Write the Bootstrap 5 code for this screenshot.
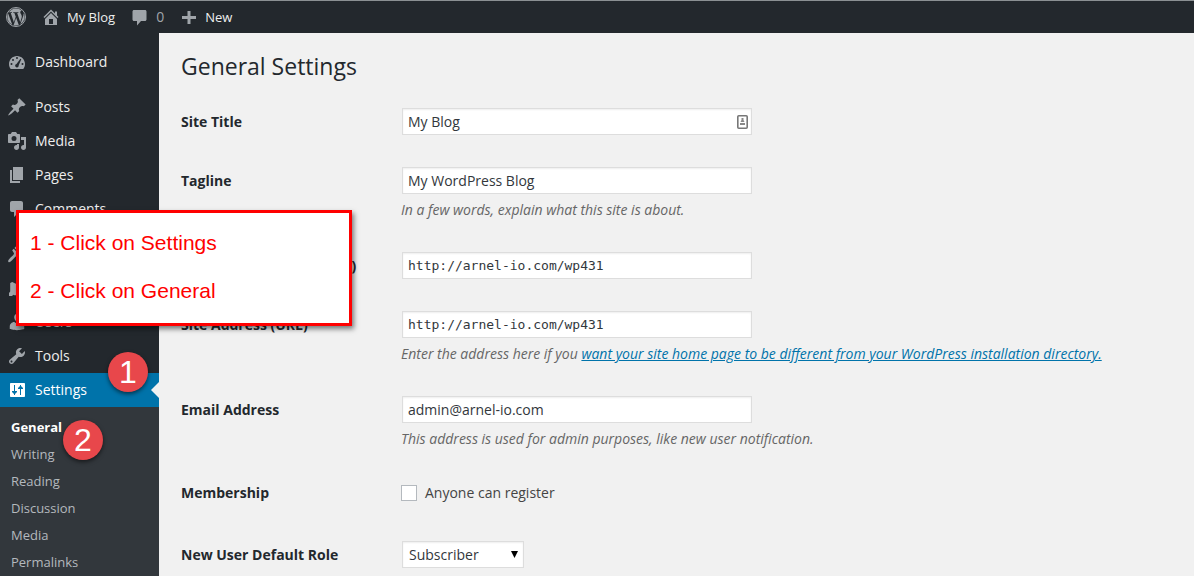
<!DOCTYPE html>
<html lang="en">
<head>
<meta charset="utf-8">
<meta name="viewport" content="width=device-width, initial-scale=1">
<title>General Settings - My Blog</title>
<link href="https://cdn.jsdelivr.net/npm/bootstrap@5.3.0/dist/css/bootstrap.min.css" rel="stylesheet">
<style>
body{font-family:"Open Sans",sans-serif;font-size:14px;line-height:20px;color:#444;background:#f1f1f1}
.topbar{height:33px;background:#23282d;border-top:1px solid #8b9093;font-size:13px;padding-left:6px;gap:15px}
.topbar a{color:#eee;text-decoration:none;gap:6px}
.topbar svg,.side-menu svg{fill:#a0a5aa;display:block;flex:none}
.topbar .count{color:#a0a5aa;font-size:14px}
.shell{min-height:calc(100vh - 33px)}
.sidebar{width:159px;flex:none;background:#23282d;padding-top:12px}
.side-menu a{color:#eee;text-decoration:none;height:34px;padding-left:7px;gap:8px}
.side-menu .group{margin-top:11px}
.side-menu .current{background:#0073aa;color:#fff}
.side-menu .current svg{fill:#fff}
.side-menu .current::after{content:"";position:absolute;right:0;top:9px;border:8px solid transparent;border-right-color:#f1f1f1;border-left:0}
.submenu{background:#32373c;padding-top:7px;font-size:13px}
.submenu a{display:block;height:27px;line-height:27px;padding-left:11px;color:#b4b9be;text-decoration:none}
.submenu .chosen{color:#fff;font-weight:700}
.content{padding:18px 22px 8px}
h1{font-size:23px;line-height:30px;font-weight:400;color:#23282d;margin:0 0 27px}
.setting{margin-bottom:32px}
.setting:last-child{margin-bottom:0}
.setting-name{width:220px;flex:none;line-height:27px;font-weight:700;color:#23282d}
.field{border:1px solid #ddd;border-radius:0;background:#fff;color:#32373c;height:27px;padding:0 5px;font-size:14px;line-height:20px;margin-left:1px;box-shadow:inset 0 1px 2px rgba(0,0,0,.07)}
.field-box{width:351px;max-width:100%}
.field.url{font-family:"DejaVu Sans Mono",monospace;font-size:13px}
.role-box{width:123px}
.role-box .field{padding-left:6px;appearance:none}
.hint{margin:6px 0 0;font-size:14px;line-height:20px;font-style:italic;color:#666}
.hint a{color:#0073aa}
.choice{height:24px;line-height:24px}
.choice .setting-name{line-height:24px}
.tick{appearance:none;width:16px;height:16px;border:1px solid #b4b9be;background:#fff;margin:0}
.over-field{right:4px;top:7px}
.over-select{right:6px;top:10px}
.callout-note{left:16px;top:210px;width:336px;height:116px;background:#fff;border:3px solid red;color:red;padding:6px 11px;font:21px/48px "Liberation Sans",sans-serif;box-shadow:2px 3px 5px rgba(0,0,0,.5);z-index:5}
.step{width:40px;height:40px;border-radius:50%;background:#e8474b;color:#fff;font:32px/40px "Liberation Sans",sans-serif;text-align:center;box-shadow:0 2px 4px rgba(0,0,0,.55);z-index:4}
.step-one{left:108px;top:-21px}
.step-two{left:63px;top:13px}
</style>
</head>
<body>
<header class="topbar d-flex align-items-center">
  <a href="#" aria-label="About WordPress"><svg width="20" height="20" viewBox="0 0 16 16"><path d="M12.633 7.653c0-.848-.305-1.435-.566-1.892l-.08-.13c-.317-.51-.594-.958-.594-1.48 0-.63.478-1.218 1.152-1.218q.03 0 .058.003l.031.003A6.84 6.84 0 0 0 8 1.137 6.86 6.86 0 0 0 2.266 4.23c.16.005.313.009.442.009.717 0 1.828-.087 1.828-.087.37-.022.414.521.044.565 0 0-.371.044-.785.065l2.5 7.434 1.5-4.506-1.07-2.929c-.369-.022-.719-.065-.719-.065-.37-.022-.326-.588.043-.566 0 0 1.134.087 1.808.087.718 0 1.83-.087 1.83-.087.37-.022.413.522.043.566 0 0-.372.043-.785.065l2.48 7.377.684-2.287.054-.173c.27-.86.469-1.495.469-2.046zM1.137 8a6.86 6.86 0 0 0 3.868 6.176L1.73 5.206A6.8 6.8 0 0 0 1.137 8M6.061 14.583l2.059-5.984 2.109 5.78q.02.05.049.094a6.85 6.85 0 0 1-4.218.109zM14.021 4.707q.046.328.047.706c0 .696-.13 1.479-.522 2.458l-2.096 6.06a6.86 6.86 0 0 0 2.572-9.224z"/><circle cx="8" cy="8" r="7.6" fill="none" stroke="#a0a5aa" stroke-width=".8"/></svg></a>
  <a href="#" class="d-flex align-items-center"><svg width="20" height="20" viewBox="0 0 20 20"><path d="M16 8.500l1.530 1.530-1.060 1.060L10 4.600l-6.470 6.490-1.060-1.060L10 2.500l4 4v-2h2v4zm-6-2.460l6 5.990V18H4v-5.970zM12 17v-5H8v5h4z"/></svg>My Blog</a>
  <a href="#" class="d-flex align-items-center" aria-label="Comments"><svg width="20" height="20" viewBox="0 0 20 20"><path d="M4 3h11c.8 0 1.500.7 1.500 1.500v8c0 .8-.7 1.500-1.500 1.500H11l-4 4.500V14H4c-.8 0-1.500-.7-1.500-1.500v-8C2.500 3.700 3.200 3 4 3z"/></svg><span class="count">0</span></a>
  <a href="#" class="d-flex align-items-center"><svg width="20" height="20" viewBox="0 0 20 20"><path d="M8.500 4h3v5h5.500v3h-5.500v5h-3v-5H3V9h5.500z"/></svg>New</a>
</header>
<div class="shell d-flex">
  <nav class="sidebar d-flex flex-column" aria-label="Main menu">
    <div class="side-menu">
      <a href="#" class="d-flex align-items-center"><svg width="20" height="20" viewBox="0 0 20 20"><path fill-rule="evenodd" d="M3.760 17h12.480c1.100-1.370 1.760-3.110 1.760-5 0-4.420-3.580-8-8-8s-8 3.580-8 8c0 1.890.660 3.630 1.760 5zM9 6a1 1 0 1 1 2 0 1 1 0 0 1-2 0zM5 8a1 1 0 1 1 2 0 1 1 0 0 1-2 0zM3.500 12a1 1 0 1 1 2 0 1 1 0 0 1-2 0zM14.500 12a1 1 0 1 1 2 0 1 1 0 0 1-2 0zM8.200 13.300c.1-.7.700-1 1.300-1.200L13.400 6.700l.9.600-2.600 6c.2 1.200-.6 2.200-1.700 2.200-1.200 0-2-1-1.800-2.200z"/></svg>Dashboard</a>
      <a href="#" class="group d-flex align-items-center"><svg width="20" height="20" viewBox="0 0 20 20"><path d="M10.440 3.020l1.820-1.820 6.360 6.350-1.830 1.820c-1.050-.680-2.480-.570-3.410.360l-.750.750c-.920.930-1.040 2.350-.350 3.410l-1.830 1.820-2.410-2.410-2.800 2.790c-.420.420-3.380 2.710-3.800 2.290s1.860-3.390 2.280-3.810l2.790-2.790L4.100 9.360l1.830-1.820c1.050.690 2.480.570 3.400-.360l.750-.750c.930-.920 1.050-2.350.360-3.410z"/></svg>Posts</a>
      <a href="#" class="d-flex align-items-center"><svg width="20" height="20" viewBox="0 0 20 20"><path fill-rule="evenodd" d="M13 11V4c0-.550-.450-1-1-1h-1.670L9 1H5L3.670 3H2c-.550 0-1 .450-1 1v7c0 .550.450 1 1 1h10c.550 0 1-.450 1-1zM7 5a2.500 2.500 0 1 1 0 5 2.500 2.500 0 0 1 0-5zM14 6h5v10.500c0 1.380-1.120 2.500-2.500 2.500S14 17.880 14 16.500s1.120-2.500 2.500-2.500c.170 0 .340.020.500.050V9h-3V6zm-4 8.050V13h2v3.500c0 1.380-1.120 2.500-2.500 2.500S7 17.880 7 16.500 8.120 14 9.500 14c.170 0 .340.020.500.050z"/></svg>Media</a>
      <a href="#" class="d-flex align-items-center"><svg width="20" height="20" viewBox="0 0 20 20"><path d="M6 15V2h10v13H6zm-1 1h8v2H3V5h2v11z"/></svg>Pages</a>
      <a href="#" class="d-flex align-items-center"><svg width="20" height="20" viewBox="0 0 20 20"><path d="M5 2h9c1.100 0 2 .9 2 2v7c0 1.100-.9 2-2 2h-2l-5 5v-5H5c-1.100 0-2-.9-2-2V4c0-1.100.9-2 2-2z"/></svg>Comments</a>
      <a href="#" class="group d-flex align-items-center" aria-label="Appearance"><svg width="20" height="20" viewBox="0 0 20 20"><path d="M14.480 11.060L7.410 3.990l1.500-1.500c.5-.560 2.300-.470 3.510.320 1.210.8 1.430 1.280 2.910 2.100 1.180.640 2.450 1.260 4.450.850zM6.700 4.700l7.070 7.070-1.500 1.500-2.100-1.500c-.9 0-2 1.300-3 2.300C5 16.400 3 19 1.500 18c-1.400-1.500 1.500-3.800 3.800-6 1-1 1.900-1.900 1.700-2.700L5.200 6.200z"/></svg></a>
      <a href="#" class="d-flex align-items-center" aria-label="Plugins"><svg width="20" height="20" viewBox="0 0 20 20"><path d="M13.100 4.400L10 7.500l2.500 2.500 3.100-3.100c.5-.5 1.200-.5 1.700 0s.5 1.200 0 1.700L14.200 11.700l1.100 1.100-3 3c-1.700 1.700-4 2-5.900 1L5 18H2v-3l1.200-1.500V5l2-1 4.200 2 2.100-3.200c.5-.5 1.200-.5 1.700 0s.4 1.100-.1 1.600z"/></svg></a>
      <a href="#" class="d-flex align-items-center"><svg width="20" height="20" viewBox="0 0 20 20"><path d="M10 9.250c-2.270 0-2.730-3.440-2.730-3.440C7 4.020 7.820 2 9.970 2c2.160 0 2.980 2.020 2.710 3.810 0 0-.410 3.440-2.680 3.440zm0 2.570L12.720 10c2.390 0 4.520 2.330 4.520 4.530v2.490s-3.650 1.130-7.240 1.130c-3.650 0-7.240-1.130-7.240-1.130v-2.490c0-2.250 1.940-4.480 4.470-4.480z"/></svg>Users</a>
      <a href="#" class="d-flex align-items-center"><svg width="20" height="20" viewBox="0 0 20 20"><path d="M16.680 9.770c-1.340 1.340-3.300 1.670-4.950.990l-5.410 6.520c-.990.990-2.590.990-3.580 0s-.990-2.590 0-3.570l6.520-5.420c-.680-1.650-.350-3.610.990-4.950 1.280-1.280 3.120-1.620 4.720-1.060l-2.890 2.890 2.820 2.820 2.860-2.870c.530 1.580.180 3.390-1.080 4.650zM3.810 16.210c.4.390 1.040.390 1.430 0 .4-.4.4-1.040 0-1.430-.390-.4-1.030-.4-1.430 0-.390.390-.390 1.030 0 1.430z"/></svg>Tools</a>
      <a href="#" class="current position-relative d-flex align-items-center"><svg width="20" height="20" viewBox="0 0 20 20"><path fill-rule="evenodd" d="M18 16V4c0-.550-.450-1-1-1H4c-.550 0-1 .450-1 1v12c0 .550.450 1 1 1h13c.550 0 1-.450 1-1zM7 5h1v6h2v1L8 14v1H7v-1l-2-2v-1h2zM13 15V9h-2V8l2-2V5h1v1l2 2v1h-2v6z"/></svg>Settings<span class="step step-one position-absolute">1</span></a>
    </div>
    <div class="submenu flex-grow-1 position-relative">
      <a href="#" class="chosen">General</a>
      <a href="#">Writing</a>
      <a href="#">Reading</a>
      <a href="#">Discussion</a>
      <a href="#">Media</a>
      <a href="#">Permalinks</a>
      <span class="step step-two position-absolute">2</span>
    </div>
  </nav>
  <main class="content flex-grow-1">
    <h1>General Settings</h1>
    <form>
      <div class="setting d-flex">
        <label class="setting-name" for="title">Site Title</label>
        <div class="field-box position-relative d-flex"><input class="field flex-grow-1" id="title" type="text" value="My Blog">
          <svg class="over-field position-absolute" width="11" height="14" viewBox="0 0 11 14"><rect x="0.800" y="0.800" width="9.400" height="12.400" rx="1" fill="#fff" stroke="#777" stroke-width="1.600"/><path d="M4.500 3h2v2l1 2h-4l1-2zM3 8h5v2H3z" fill="#888"/></svg></div>
      </div>
      <div class="setting d-flex">
        <label class="setting-name" for="tagline">Tagline</label>
        <div class="flex-grow-1"><div class="field-box d-flex"><input class="field flex-grow-1" id="tagline" type="text" value="My WordPress Blog"></div>
          <p class="hint">In a few words, explain what this site is about.</p></div>
      </div>
      <div class="setting d-flex">
        <label class="setting-name" for="wpurl">WordPress Address (URL)</label>
        <div class="field-box d-flex"><input class="field url flex-grow-1" id="wpurl" type="url" value="http://arnel-io.com/wp431"></div>
      </div>
      <div class="setting d-flex">
        <label class="setting-name" for="siteurl">Site Address (URL)</label>
        <div class="flex-grow-1"><div class="field-box d-flex"><input class="field url flex-grow-1" id="siteurl" type="url" value="http://arnel-io.com/wp431"></div>
          <p class="hint">Enter the address here if you <a href="#">want your site home page to be different from your WordPress installation directory.</a></p></div>
      </div>
      <div class="setting d-flex">
        <label class="setting-name" for="email">Email Address</label>
        <div class="flex-grow-1"><div class="field-box d-flex"><input class="field flex-grow-1" id="email" type="email" value="admin@arnel-io.com"></div>
          <p class="hint">This address is used for admin purposes, like new user notification.</p></div>
      </div>
      <div class="setting choice d-flex">
        <span class="setting-name">Membership</span>
        <label class="d-flex align-items-center gap-2" for="register"><input class="tick" id="register" type="checkbox">Anyone can register</label>
      </div>
      <div class="setting d-flex pt-1">
        <label class="setting-name" for="role">New User Default Role</label>
        <div class="role-box position-relative d-flex"><select class="field flex-grow-1" id="role"><option>Subscriber</option></select>
          <svg class="over-select position-absolute pe-none" width="7" height="7" viewBox="0 0 7 7"><path d="M0 0h7L3.500 7z"/></svg></div>
      </div>
    </form>
  </main>
</div>
<aside class="callout-note position-absolute" aria-label="Instructions">
  <div>1 - Click on Settings</div>
  <div>2 - Click on General</div>
</aside>
</body>
</html>
